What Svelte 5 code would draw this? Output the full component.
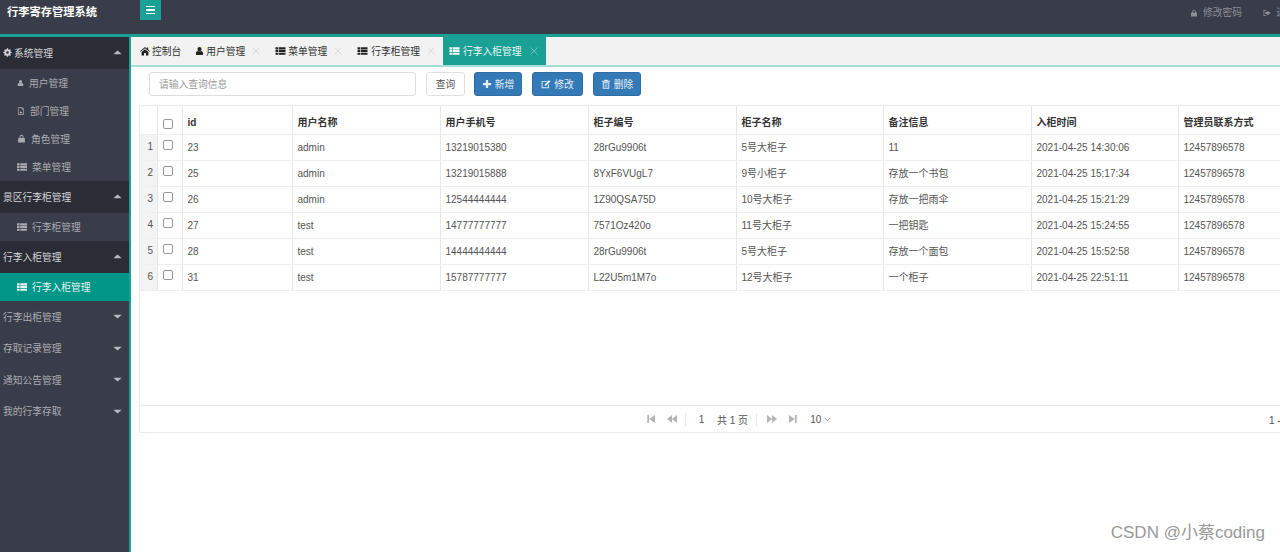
<script>
  const paths = {
    home: 'M8 1.500 0 8.200l1 1.100L8 3.500l7 5.800 1-1.100-3-2.500V2.500h-2.300v1.800zM8 5 2.500 9.600V15h4v-4h3v4h4V9.600z',
    user: 'M8 1a3.700 3.700 0 1 1 0 7.400A3.700 3.700 0 1 1 8 1zM1.500 13.500c0-3.800 1.500-5.600 3.500-5.600 1.500 1.100 4.500 1.100 6 0 2 0 3.500 1.800 3.500 5.600 0 1-.8 1.500-1.600 1.500H3.100c-.8 0-1.600-.5-1.600-1.500z',
    list: 'M0 2h4.200v3.400H0zM5.200 2H16v3.400H5.200zM0 6.300h4.200v3.400H0zM5.200 6.300H16v3.400H5.200zM0 10.600h4.200V14H0zM5.200 10.600H16V14H5.200z',
    cog: 'M7 .500h2l.4 2.200 1.300.5 1.800-1.200 1.500 1.500-1.200 1.800.5 1.300 2.200.4v2l-2.200.4-.5 1.300 1.200 1.800-1.500 1.500-1.800-1.200-1.300.5-.4 2.200H7l-.4-2.200-1.300-.5-1.800 1.200-1.500-1.500 1.200-1.800-.5-1.300L.5 9V7l2.200-.4.5-1.300-1.200-1.800 1.500-1.500 1.800 1.200 1.300-.5zM8 5.600a2.400 2.400 0 1 0 0 4.800 2.400 2.400 0 1 0 0-4.800z',
    file: 'M2 .500h8.500L14 4v11.500H2zM3.300 1.800v12.400h9.400V5.200H9.300V1.800zM4.800 12.500l2-4.500 1.500 2.500 1-1 2 3z',
    lock: 'M4.500 7V4.800a3.500 3.500 0 0 1 7 0V7H14v8H2V7zM6.200 7h3.600V4.800a1.800 1.800 0 0 0-3.600 0z',
    plus: 'M6.200 1.500h3.600v4.700h4.700v3.600H9.800v4.700H6.200V9.800H1.500V6.200h4.700z',
    edit: 'M1 3h9.500L9.200 4.400H2.400v8.800h8.800V9l1.400-1.400V14.600H1zM6 8.700 12.700 1.500 15 3.800 8 10.800H6z',
    trash: 'M5.500 1h5l.6 1.700h3.400v1.500h-13V2.700h3.400zM2.800 5.200h10.400V15.500H2.800zM4.300 6.600v7.500h7.400V6.600zM6 7.500h1.100v5.500H6zM8.900 7.500H10v5.500H8.900z',
    out: 'M1 2h5.500v1.500H2.500v9h4V14H1zM8.500 3.700 15.500 8l-7 4.300V9.800H4.500V6.200h4z',
    first: 'M2 1.500h2.800v13H2zM14.500 1.500v13L5 8z',
    prev: 'M8 1.500v13L0 8zM16 1.500v13L8 8z',
    next: 'M8 1.500v13L16 8zM0 1.500v13L8 8z',
    last: 'M14 1.500h-2.800v13H14zM1.500 1.500v13L11 8z',
    up: 'M8 4.500 15.500 11H.5z',
    down: 'M8 11.500.5 5h15z'
  };

  const tabs = [
    { icon: 'home', label: '控制台' },
    { icon: 'user', label: '用户管理', close: true },
    { icon: 'list', label: '菜单管理', close: true },
    { icon: 'list', label: '行李柜管理', close: true },
    { icon: 'list', label: '行李入柜管理', close: true, active: true }
  ];

  const menu = [
    { label: '系统管理', icon: 'cog', open: true, items: [
      { icon: 'user', label: '用户管理' },
      { icon: 'file', label: '部门管理' },
      { icon: 'lock', label: '角色管理' },
      { icon: 'list', label: '菜单管理' }
    ] },
    { label: '景区行李柜管理', open: true, items: [{ icon: 'list', label: '行李柜管理' }] },
    { label: '行李入柜管理', open: true, items: [{ icon: 'list', label: '行李入柜管理', active: true }] },
    { label: '行李出柜管理', items: [] },
    { label: '存取记录管理', items: [] },
    { label: '通知公告管理', items: [] },
    { label: '我的行李存取', items: [] }
  ];

  const heads = ['id', '用户名称', '用户手机号', '柜子编号', '柜子名称', '备注信息', '入柜时间', '管理员联系方式'];
  const rows = [
    ['23', 'admin', '13219015380', '28rGu9906t', '5号大柜子', '11', '2021-04-25 14:30:06', '12457896578'],
    ['25', 'admin', '13219015888', '8YxF6VUgL7', '9号小柜子', '存放一个书包', '2021-04-25 15:17:34', '12457896578'],
    ['26', 'admin', '12544444444', '1Z90QSA75D', '10号大柜子', '存放一把雨伞', '2021-04-25 15:21:29', '12457896578'],
    ['27', 'test', '14777777777', '7571Oz420o', '11号大柜子', '一把钥匙', '2021-04-25 15:24:55', '12457896578'],
    ['28', 'test', '14444444444', '28rGu9906t', '5号大柜子', '存放一个面包', '2021-04-25 15:52:58', '12457896578'],
    ['31', 'test', '15787777777', 'L22U5m1M7o', '12号大柜子', '一个柜子', '2021-04-25 22:51:11', '12457896578']
  ];
</script>

{#snippet icon(name, cls = '')}
  <svg class="ic ic-{name} {cls}" viewBox="0 0 16 16" aria-hidden="true"><path fill-rule="evenodd" d={paths[name]} /></svg>
{/snippet}

<div class="page">
  <header class="top">
    <div class="brand">行李寄存管理系统</div>
    <button class="burger" aria-label="菜单"><span></span><span></span><span></span></button>
    <div class="links">
      <span class="link pw">{@render icon('lock', 'tiny')}修改密码</span>
      <span class="link">{@render icon('out', 'tiny')}退出</span>
    </div>
  </header>

  <div class="body">
    <nav class="side">
      {#each menu as g}
        <div class="head" class:open={g.open}>
          <span class="head-l">{#if g.icon}{@render icon(g.icon, 'cog')}{/if}{g.label}</span>
          {@render icon(g.open ? 'up' : 'down', 'caret')}
        </div>
        {#each g.items as it}
          <div class="item" class:active={it.active}>
            {@render icon(it.icon, 'mi')}<span>{it.label}</span>
          </div>
        {/each}
      {/each}
    </nav>

    <main class="main">
      <div class="tabs">
        {#each tabs as t}
          <div class="tab" class:active={t.active}>
            {@render icon(t.icon)}<span>{t.label}</span>
            {#if t.close}
              <svg class="x" viewBox="0 0 8 8" aria-hidden="true"><path d="M.5.500l7 7M7.500.500l-7 7" /></svg>
            {/if}
          </div>
        {/each}
      </div>

      <div class="tools">
        <input class="search" placeholder="请输入查询信息" />
        <button class="btn plain">查询</button>
        <button class="btn blue add">{@render icon('plus')}新增</button>
        <button class="btn blue edit">{@render icon('edit')}修改</button>
        <button class="btn blue del">{@render icon('trash')}删除</button>
      </div>

      <div class="panel">
        <div class="grid">
          <table>
            <colgroup>
              <col class="c-n" /><col class="c-k" /><col class="c-id" /><col class="c-a" /><col class="c-a" /><col class="c-a" /><col class="c-b" /><col class="c-a" /><col class="c-b" /><col class="c-l" />
            </colgroup>
            <thead>
              <tr>
                <th class="num"></th>
                <th class="chk"><input type="checkbox" /></th>
                {#each heads as h}<th>{h}</th>{/each}
              </tr>
            </thead>
            <tbody>
              {#each rows as r, i}
                <tr>
                  <td class="num">{i + 1}</td>
                  <td class="chk"><input type="checkbox" /></td>
                  {#each r as c}<td>{c}</td>{/each}
                </tr>
              {/each}
            </tbody>
          </table>
        </div>
        <div class="pager">
          <div class="pg">
            {@render icon('first', 'pi')}
            {@render icon('prev', 'pi p2')}
            <i class="sep s1"></i>
            <span class="pnum">1</span>
            <span class="ptotal">共 1 页</span>
            <i class="sep s2"></i>
            {@render icon('next', 'pi')}
            {@render icon('last', 'pi p2')}
            <span class="psize">10<svg class="chev" viewBox="0 0 8 6" aria-hidden="true"><path d="M.5 1l3.500 3.500L7.500 1" /></svg></span>
          </div>
          <span class="range">1 - 6 共 6 条</span>
        </div>
      </div>
    </main>
  </div>

  <div class="mark">CSDN @小蔡coding</div>
</div>

<style>
  :global(body) {
    margin: 0;
    background: #fff;
    overflow: hidden;
  }
  .page {
    position: relative;
    width: 1280px;
    height: 552px;
    overflow: hidden;
    font-family: "Liberation Sans", "Noto Sans CJK SC", sans-serif;
    font-size: 9.750px;
    color: #555;
  }
  .ic {
    width: 10px;
    height: 10px;
    fill: currentColor;
    flex: none;
  }

  .top {
    height: 34px;
    background: #393d49;
    border-bottom: 3px solid #1aa094;
    display: flex;
    align-items: flex-start;
    box-sizing: content-box;
  }
  .brand {
    width: 140px;
    padding: 5px 0 0 7px;
    box-sizing: border-box;
    color: #fff;
    font-size: 11.250px;
    font-weight: bold;
    line-height: 14px;
  }
  .burger {
    width: 21px;
    height: 20px;
    padding: 0;
    border: 0;
    background: #1aa094;
    display: flex;
    flex-direction: column;
    align-items: center;
    justify-content: center;
    gap: 2px;
  }
  .burger span {
    width: 9px;
    height: 1.500px;
    background: #fff;
  }
  .links {
    margin-left: auto;
    display: flex;
    padding-top: 6px;
    color: #8d8f97;
    line-height: 14px;
    white-space: nowrap;
    width: 90px;
  }
  .link {
    display: flex;
    align-items: center;
    gap: 5px;
  }
  .pw {
    margin-right: 21px;
  }
  .tiny {
    width: 8px;
    height: 8px;
  }

  .body {
    display: grid;
    grid-template-columns: 129px 1fr;
    height: 515px;
  }
  .side {
    background: #393d49;
    border-right: 2px solid #1aa094;
    width: 129px;
    box-sizing: content-box;
    color: #a9abb1;
  }
  .head {
    height: 31.500px;
    display: flex;
    align-items: center;
    justify-content: space-between;
    padding: 0 7px 0 3px;
    box-sizing: border-box;
  }
  .head.open {
    height: 32px;
    padding-bottom: 1px;
    background: #2a2c36;
    color: #d4d5d8;
  }
  .head-l {
    display: flex;
    align-items: center;
    gap: 2px;
  }
  .cog {
    width: 9px;
    height: 9px;
  }
  .caret {
    width: 9px;
    height: 9px;
    color: #b8b9be;
  }
  .item {
    height: 28px;
    display: flex;
    align-items: center;
    gap: 5px;
    padding: 0 0 1px 17px;
    box-sizing: border-box;
  }
  .item.active {
    background: #009688;
    color: #e6f4f2;
  }
  .mi {
    width: 10px;
    height: 10px;
  }
  .mi.ic-user {
    width: 7px;
    height: 8px;
  }
  .mi.ic-file {
    width: 8px;
    height: 10px;
  }
  .mi.ic-lock {
    width: 9px;
    height: 9px;
  }

  .main {
    margin-left: 2px;
    min-width: 0;
    overflow: hidden;
    background: #fff;
  }
  .tabs {
    height: 28px;
    background: #f2f2f2;
    border-bottom: 2px solid #a8dcd6;
    display: flex;
    box-sizing: content-box;
    padding-left: 2px;
  }
  .tab {
    display: flex;
    align-items: center;
    height: 28px;
    padding: 0 0 0 7px;
    color: #333;
    gap: 2px;
  }
  .tab:first-child {
    padding-right: 7px;
  }
  .tab:nth-child(4) {
    gap: 3px;
  }
  .tab .ic {
    width: 10px;
    height: 10px;
    color: #222;
  }
  .tab .ic-user {
    width: 9px;
  }
  .tab .ic-list {
    width: 11px;
  }
  .tab.active {
    background: #1aa094;
    color: #e8f6f4;
    padding: 0 0 0 6px;
    gap: 3px;
  }
  .tab.active .ic {
    color: #fff;
  }
  .x {
    width: 8px;
    height: 8px;
    margin: 0 8px 0 5px;
    stroke: #cfcfcf;
    fill: none;
    stroke-width: 0.700;
  }
  .tab:nth-child(4) .x {
    margin-left: 4px;
  }
  .tab.active .x {
    stroke: #8fd4cc;
  }

  .tools {
    display: flex;
    align-items: center;
    height: 24px;
    margin: 5px 0 0 18px;
  }
  .search {
    width: 267px;
    height: 24px;
    box-sizing: border-box;
    border: 1px solid #ddd;
    border-radius: 3px;
    padding: 0 9px;
    font: inherit;
    outline: none;
  }
  .search::placeholder {
    color: #999;
  }
  .btn {
    height: 24px;
    box-sizing: border-box;
    border-radius: 3px;
    font: inherit;
    padding: 0;
    display: flex;
    align-items: center;
    justify-content: center;
    gap: 3px;
  }
  .btn .ic {
    width: 10px;
    height: 10px;
  }
  .plain {
    width: 39px;
    margin-left: 10px;
    background: #fff;
    border: 1px solid #e0e0e0;
    color: #555;
  }
  .blue {
    background: #337ab7;
    border: 1px solid #2e6da4;
    color: #e3edf5;
  }
  .add {
    width: 48px;
    margin-left: 9px;
  }
  .edit {
    width: 51px;
    margin-left: 10px;
  }
  .del {
    width: 48px;
    margin-left: 10px;
  }

  .panel {
    margin: 9px 0 0 8px;
    width: 1260px;
    height: 328px;
    box-sizing: border-box;
    border: 1px solid #e9e9e9;
    border-radius: 2px;
    display: flex;
    flex-direction: column;
  }
  .grid {
    flex: 1;
    min-height: 0;
    border-bottom: 1px solid #e7e7e7;
    overflow: hidden;
  }
  table {
    border-collapse: collapse;
    table-layout: fixed;
    width: 1258px;
    font-size: 10px;
  }
  .c-n { width: 17px; }
  .c-k { width: 25px; }
  .c-id { width: 110px; }
  .c-a { width: 148px; }
  .c-b { width: 147px; }
  .c-l { width: 220px; }
  th, td {
    height: 26px;
    padding: 0 0 0 5px;
    box-sizing: border-box;
    text-align: left;
    white-space: nowrap;
    overflow: hidden;
    border-left: 1px solid #e7e7e7;
    border-bottom: 1.500px solid #efefef;
    line-height: 14px;
  }
  th {
    height: 28px;
    padding-top: 6px;
    color: #333;
    font-weight: bold;
  }
  td {
    padding-top: 2px;
  }
  th:first-child, td:first-child {
    border-left: 0;
  }
  .num {
    padding: 0 0 0 4px;
    text-align: center;
  }
  td.num {
    background: #f3f3f3;
    padding: 0 0 0 4px;
  }
  .chk {
    padding: 0;
    text-align: center;
    vertical-align: top;
  }
  input[type="checkbox"] {
    appearance: none;
    width: 10px;
    height: 10px;
    margin: 5px 0 0 5px;
    padding: 0;
    border: 1px solid #999;
    border-radius: 2px;
    background: #fff;
    box-sizing: border-box;
    display: block;
  }
  th.chk input[type="checkbox"] {
    margin-top: 13px;
  }

  .pager {
    height: 26px;
    flex: none;
    position: relative;
    display: flex;
    align-items: center;
    color: #555;
    font-size: 10px;
  }
  .pg {
    display: flex;
    align-items: center;
    margin-left: 506px;
  }
  .pi {
    width: 10px;
    height: 10px;
    color: #b4b4b4;
  }
  .p2 { margin-left: 11px; }
  .sep {
    width: 1px;
    height: 13px;
    background: #e8e8e8;
  }
  .s1 { margin-left: 8px; }
  .s2 { margin: 0 10px 0 8px; }
  .pnum {
    width: 19px;
    margin-left: 6px;
    text-align: center;
  }
  .ptotal {
    margin-left: 6px;
  }
  .psize {
    margin-left: 8px;
    display: flex;
    align-items: center;
    gap: 3px;
    padding: 1px 2px 1px 4px;
    border-radius: 2px;
  }
  .chev {
    width: 7px;
    height: 5px;
    stroke: #777;
    fill: none;
    stroke-width: 0.900;
  }
  .range {
    position: absolute;
    left: 1129px;
    white-space: nowrap;
  }

  .mark {
    position: absolute;
    right: 15px;
    bottom: 8px;
    font-size: 17px;
    line-height: 22px;
    color: #999;
  }
</style>
